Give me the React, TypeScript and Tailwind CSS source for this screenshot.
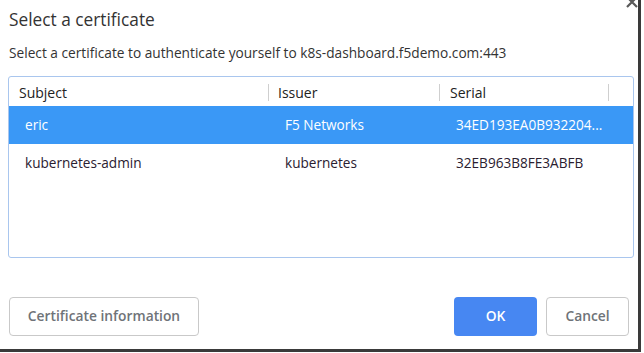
import React from "react";

const font = { fontFamily: '"Open Sans", "Noto Sans", sans-serif' };

export default function App() {
  return (
    <div className="w-[644px] h-[353px] bg-white relative overflow-hidden" style={font}>
      <div className="w-[641px] h-[352px] border-r-[3px] border-b-[3px] border-[#3a3a3a] bg-white relative">
        {/* close X */}
        <svg className="absolute left-[625px] top-[-5px]" width="14" height="14" viewBox="0 0 14 14">
          <path d="M2 2 L12 12 M12 2 L2 12" stroke="#5a5a5a" strokeWidth="2.2" />
        </svg>
        <div className="pt-[8px] pl-[9px] text-[17.3px] leading-[24px] text-[#333]">Select a certificate</div>
        <div className="pt-[12px] pl-[9px] text-[13.7px] leading-[18px] text-[#333]">
          Select a certificate to authenticate yourself to k8s-dashboard.f5demo.com:443
        </div>
        <div className="mt-[14px] ml-[8px] w-[626px] h-[182px] border border-[#a9c6ee] rounded-[3px] overflow-hidden">
          <div className="h-[29px] pt-[2px] flex items-center text-[14px] text-[#222]">
            <div className="w-[260px] pl-[10px] flex items-center justify-between">
              <span>Subject</span>
              <span className="w-[1px] h-[17px] bg-[#cfcfcf]" />
            </div>
            <div className="w-[171px] pl-[9px] flex items-center justify-between">
              <span>Issuer</span>
              <span className="w-[1px] h-[17px] bg-[#cfcfcf]" />
            </div>
            <div className="w-[169px] pl-[10px] flex items-center justify-between">
              <span>Serial</span>
              <span className="w-[1px] h-[17px] bg-[#cfcfcf]" />
            </div>
          </div>
          <div className="h-[38px] bg-[#3a98f6] flex items-center text-[13.6px] text-white">
            <div className="w-[260px] pl-[16px]">eric</div>
            <div className="w-[171px] pl-[16px]">F5 Networks</div>
            <div className="pl-[16px]">34ED193EA0B932204...</div>
          </div>
          <div className="h-[39px] flex items-center text-[13.6px] text-[#2a2030]">
            <div className="w-[260px] pl-[16px]">kubernetes-admin</div>
            <div className="w-[171px] pl-[16px]">kubernetes</div>
            <div className="pl-[16px]">32EB963B8FE3ABFB</div>
          </div>
        </div>
        <div className="mt-[39px] px-[9px] flex items-center">
          <button className="w-[190px] h-[39px] border border-[#c9c9c9] rounded-[4px] bg-white text-[13.8px] font-semibold text-[#6f7378]">
            Certificate information
          </button>
          <div className="flex-1" />
          <button className="w-[83px] h-[39px] rounded-[4px] bg-[#4787f2] text-[13.8px] font-semibold text-white">
            OK
          </button>
          <button className="ml-[9px] w-[83px] h-[39px] border border-[#c9c9c9] rounded-[4px] bg-white text-[13.8px] font-semibold text-[#6f7378]">
            Cancel
          </button>
        </div>
      </div>
    </div>
  );
}
